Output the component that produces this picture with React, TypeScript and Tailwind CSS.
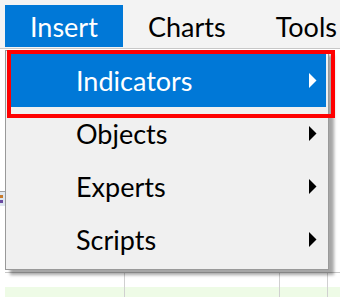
import { ReactNode } from 'react';

const font = { fontFamily: 'Lato, "Open Sans", sans-serif' };

function Arrow({ white }: { white?: boolean }) {
  return (
    <svg width="9" height="15" viewBox="0 0 9 15" className="shrink-0">
      <path d="M1 0 L8.5 7.5 L1 15 Z" fill={white ? '#ffffff' : '#000000'} />
    </svg>
  );
}

function MenuItem({ label, active }: { label: string; active?: boolean }) {
  return (
    <div
      className={`h-[53px] flex items-center justify-between pl-[68px] pr-[9px] ${
        active ? 'bg-[#0078d7] text-white' : 'text-black'
      }`}
    >
      <span className="text-[27px] leading-none">{label}</span>
      <Arrow white={active} />
    </div>
  );
}

function TopItem({ children, active }: { children: ReactNode; active?: boolean }) {
  return (
    <div
      className={`h-[42px] flex items-center px-[25px] text-[27px] leading-none ${
        active ? 'bg-[#0078d7] text-white' : 'text-black'
      }`}
    >
      {children}
    </div>
  );
}

export default function App() {
  return (
    <div className="relative w-[340px] h-[297px] overflow-hidden bg-white" style={font}>
      {/* menu bar */}
      <div className="h-[49px] bg-[#f3f3f3] border-b border-[#c8c8c8] flex items-start pt-[5px] pl-[5px]">
        <TopItem active>Insert</TopItem>
        <TopItem>Charts</TopItem>
        <TopItem>Tools</TopItem>
      </div>

      {/* workspace behind the menu */}
      <div className="flex h-[248px]">
        <div className="w-[5px] flex flex-col">
          <div className="h-[142px]" />
          <div className="h-[1px] bg-[#a0a0a0]" />
          <div className="h-[14px] bg-[#dfe7f0] flex flex-col items-start justify-center gap-[2px]">
            <div className="w-[3px] h-[3px] bg-[#c77b2c]" />
            <div className="w-[3px] h-[3px] bg-[#6a4aa0]" />
          </div>
        </div>
        <div className="flex-1 flex flex-col">
          <div className="h-[223px]" />
          <div className="flex-1 flex flex-col border-t border-[#c8c8c8]">
            <div className="h-[14px] flex">
              <div className="w-[120px] border-r border-[#d0d0d0]" />
              <div className="w-[155px] border-r border-[#d0d0d0]" />
              <div className="w-[48px] border-r border-[#d0d0d0]" />
            </div>
            <div className="flex-1 bg-[#eefbe6] flex">
              <div className="w-[120px] border-r border-[#d0d0d0]" />
              <div className="w-[155px] border-r border-[#d0d0d0]" />
              <div className="w-[48px] border-r border-[#d0d0d0]" />
            </div>
          </div>
        </div>
      </div>

      {/* dropdown */}
      <div className="absolute left-[5px] top-[50px] w-[324px] h-[220px] bg-[#f0f0f0] border border-[#999999] py-[3px] px-[2px] shadow-[5px_5px_3px_rgba(0,0,0,0.35)]">
        <MenuItem label="Indicators" active />
        <MenuItem label="Objects" />
        <MenuItem label="Experts" />
        <MenuItem label="Scripts" />
      </div>

      {/* red highlight frame */}
      <div className="absolute left-[7px] top-[50px] w-[328px] h-[68px] border-[4px] border-[#ff0000]" />
    </div>
  );
}
